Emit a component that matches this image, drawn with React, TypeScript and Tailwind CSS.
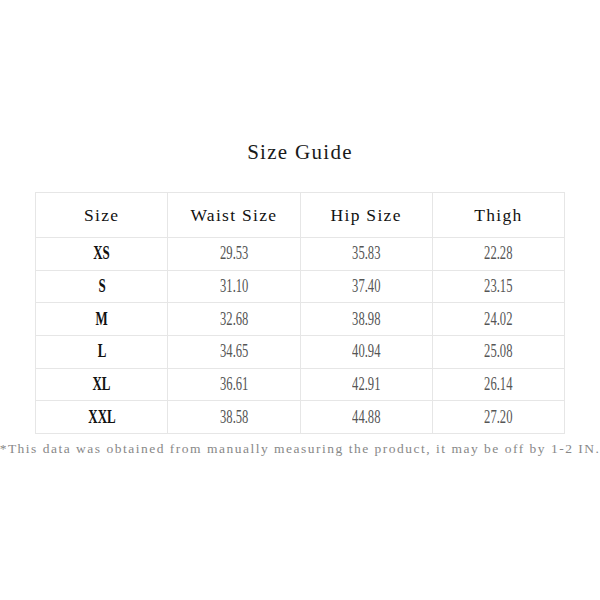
const rows = [
  ["XS", "29.53", "35.83", "22.28"],
  ["S", "31.10", "37.40", "23.15"],
  ["M", "32.68", "38.98", "24.02"],
  ["L", "34.65", "40.94", "25.08"],
  ["XL", "36.61", "42.91", "26.14"],
  ["XXL", "38.58", "44.88", "27.20"],
]

const headers = ["Size", "Waist Size", "Hip Size", "Thigh"]

export default function App() {
  return (
    <div className="w-[600px] h-[600px] bg-white flex flex-col items-center pt-[140px] font-['Liberation_Serif',serif]">
      <h1 className="h-[24px] leading-[24px] text-[21px] tracking-[1.3px] text-[#1a1a1a] whitespace-nowrap">
        Size Guide
      </h1>

      <div className="mt-[28px] w-[530px] grid grid-cols-4 border-l border-t border-[#e6e6e6]">
        {headers.map((h) => (
          <div
            key={h}
            className="h-[45px] flex items-center justify-center border-r border-b border-[#e6e6e6] text-[17.5px] tracking-[1.3px] text-[#111] whitespace-nowrap"
          >
            {h}
          </div>
        ))}
        {rows.map((r) =>
          r.map((cell, i) => (
            <div
              key={r[0] + i}
              className="h-[32.67px] flex items-center justify-center border-r border-b border-[#e6e6e6] whitespace-nowrap"
            >
              {i === 0 ? (
                <span className="inline-block scale-x-[0.72] text-[18px] font-bold text-[#111]">{cell}</span>
              ) : (
                <span className="inline-block scale-x-[0.7] text-[18px] text-[#555]">{cell}</span>
              )}
            </div>
          ))
        )}
      </div>

      <div className="mt-[5px] w-[600px] h-[20px] flex justify-center items-center whitespace-nowrap text-[13.5px] tracking-[1.5px] text-[#888]">
        *This data was obtained from manually measuring the product, it may be off by 1-2 IN.
      </div>
    </div>
  )
}
